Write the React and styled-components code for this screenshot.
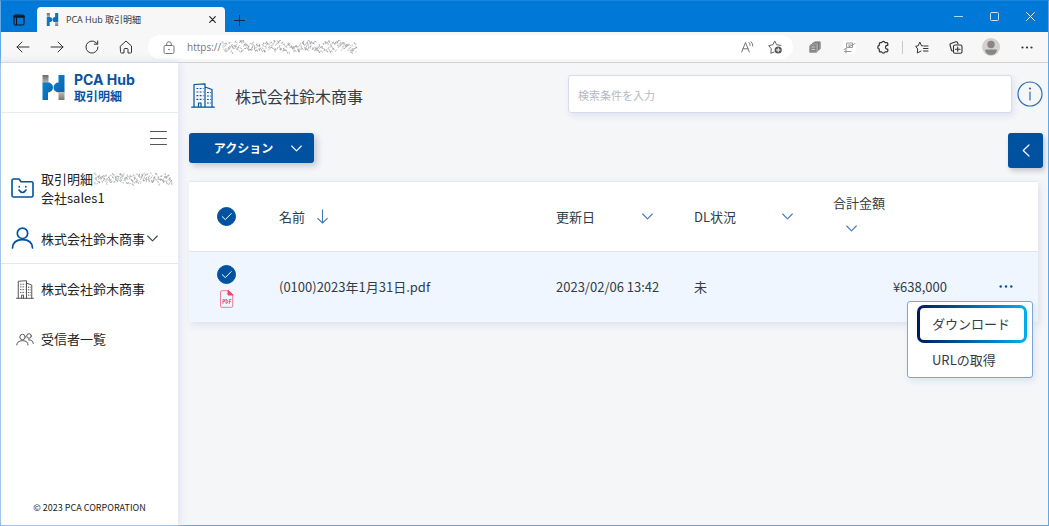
import React from "react";
import styled, { createGlobalStyle } from "styled-components";

const BLUE = "#0052a0";
const INK = "#333c48";

const GlobalStyle = createGlobalStyle`
  *, *::before, *::after { box-sizing: border-box; }
  body {
    margin: 0;
    color: ${INK};
    font-family: "Noto Sans CJK JP", "Noto Sans", sans-serif;
    font-size: 13px;
    line-height: 20px;
  }
  button, input { font: inherit; color: inherit; }
  svg { display: block; flex: none; }
`;

/* ---------- browser frame ---------- */

const Window = styled.div`
  display: flex;
  flex-direction: column;
  min-height: 100vh;
  border: 1px solid #62a8e5;
  border-top-color: #1a84dc;
  background: #f4f6f8;
`;

const TitleBar = styled.header`
  display: flex;
  align-items: flex-end;
  height: 31px;
  background: #0078d7;
`;

const PlainButton = styled.button`
  display: flex;
  align-items: center;
  justify-content: center;
  flex: none;
  padding: 0;
  border: 0;
  background: none;
  cursor: pointer;
`;

const TabMenuButton = styled(PlainButton)`
  width: 36px;
  height: 25px;
`;

const BrowserTab = styled.div`
  display: flex;
  align-items: center;
  gap: 7px;
  width: 188px;
  height: 25px;
  padding: 0 6px 0 9px;
  border-radius: 4px 4px 0 0;
  background: #f7f7f7;
  color: #333;
  font-family: "Open Sans", "Noto Sans CJK JP", sans-serif;
  font-size: 9px;
  line-height: 14px;
`;

const TabTitle = styled.span`
  flex: 1;
  white-space: nowrap;
`;

const TabButton = styled(PlainButton)`
  width: ${(p) => p.$width}px;
  height: 24px;
`;

const WindowControls = styled.div`
  display: flex;
  align-self: stretch;
  margin-left: auto;
`;

const WindowButton = styled(PlainButton)`
  width: 36px;
  height: 30px;
`;

const Toolbar = styled.div`
  display: flex;
  align-items: center;
  height: 31px;
  padding: 0 3px 0 5px;
  border-bottom: 1px solid #cfd1d3;
  background: #f7f7f7;
`;

const ToolButton = styled(PlainButton)`
  width: ${(p) => p.$width || 34}px;
  height: 24px;
`;

const Address = styled.div`
  display: flex;
  align-items: center;
  flex: 1;
  min-width: 0;
  height: 24px;
  margin: 0 5px;
  padding: 0 4px 0 15px;
  border-radius: 12px;
  background: #fff;
`;

const Url = styled.div`
  display: flex;
  align-items: center;
  flex: 1;
  margin-left: 12px;
  color: #777;
  font-family: "Open Sans", "Noto Sans", sans-serif;
  font-size: 10px;
`;

const AddressButton = styled(PlainButton)`
  width: 28px;
  height: 24px;
`;

const Separator = styled.span`
  width: 1px;
  height: 13px;
  margin: 0 2px;
  background: #c9c9c9;
`;

/* ---------- sidebar ---------- */

const Body = styled.div`
  display: flex;
  flex: 1;
`;

const Sidebar = styled.aside`
  display: flex;
  flex-direction: column;
  flex: none;
  width: 177px;
  background: #fff;
  box-shadow: 0 0 8px 1px #dcdfee;
`;

const Brand = styled.a`
  display: flex;
  align-items: center;
  gap: 9px;
  height: 50px;
  padding-left: 41px;
  border-bottom: 1px solid #e9ecef;
  color: #08529f;
  font-weight: 700;
  text-decoration: none;
`;

const BrandText = styled.span`
  display: flex;
  flex-direction: column;
  font-size: 12px;
  line-height: 16px;
`;

const BrandName = styled.span`
  font-family: Inter, "Noto Sans", sans-serif;
  font-size: 14px;
`;

const MenuToggle = styled(PlainButton)`
  align-self: flex-end;
  width: 39px;
  height: 50px;
`;

const AccountBlock = styled.div`
  display: flex;
  flex-direction: column;
  border-bottom: 1px solid #e4e7eb;
`;

const AccountRow = styled.div`
  display: flex;
  align-items: center;
  gap: 7px;
  min-height: 50px;
  padding-left: 10px;
  color: #222;
  line-height: 19px;
`;

const AccountName = styled.span`
  display: flex;
  align-items: center;
`;

const AccountButton = styled(PlainButton)`
  gap: 2px;
  color: #222;
`;

const Nav = styled.nav`
  display: flex;
  flex-direction: column;
  flex: 1;
`;

const NavLink = styled.a`
  display: flex;
  align-items: center;
  gap: 7px;
  height: 50px;
  padding-left: 15px;
  color: #222;
  text-decoration: none;
`;

const Copyright = styled.footer`
  padding: 7px 0;
  color: #222;
  font-size: 9px;
  text-align: center;
`;

/* ---------- main area ---------- */

const Main = styled.main`
  flex: 1;
  min-width: 0;
  padding: 12px 5px 24px 11px;
`;

const PageHeader = styled.div`
  display: grid;
  grid-template-columns: 46px 1fr 52% 31px;
  align-items: center;
  padding-bottom: 20px;
`;

const HeaderIcon = styled.span`
  padding: 2px 0 0 2px;
`;

const Title = styled.h1`
  margin: 0;
  padding-top: 4px;
  font-size: 16px;
  font-weight: 400;
  line-height: 24px;
`;

const Search = styled.input`
  width: 100%;
  height: 38px;
  padding: 2px 9px 0;
  border: 1px solid #d8dcea;
  border-radius: 3px;
  outline: 0;
  background: #fff;
  box-shadow: 2px 3px 6px #dfe3ef;
  font-size: 11px;
  &::placeholder { color: #b4bac2; opacity: 1; }
`;

const InfoButton = styled(PlainButton)`
  justify-self: end;
`;

const ActionBar = styled.div`
  display: flex;
  align-items: flex-start;
  justify-content: space-between;
  padding-bottom: 13px;
`;

const ActionButton = styled(PlainButton)`
  gap: 18px;
  width: 125px;
  height: 30px;
  padding-left: 13px;
  border-radius: 3px;
  background: ${BLUE};
  box-shadow: 3px 3px 6px #c3c7ce;
  color: #fff;
  font-size: 12px;
  font-weight: 700;
`;

const CollapseButton = styled(PlainButton)`
  width: 35px;
  height: 35px;
  border-radius: 3px;
  background: ${BLUE};
  box-shadow: 2px 3px 5px #c3c7ce;
`;

const TableArea = styled.div`
  margin-right: 5px;
  box-shadow: 2px 3px 7px #dde1ec;
`;

const Table = styled.table`
  width: 100%;
  table-layout: fixed;
  border-collapse: collapse;
  background: #fff;
  text-align: left;
`;

const Col = styled.col`
  width: ${(p) => (p.$width ? `${p.$width}px` : "auto")};
`;

const HeadRow = styled.tr`
  height: 70px;
  border-top: 1px solid #e4e8ec;
  border-bottom: 1px solid #dde3e8;
`;

const DataRow = styled.tr`
  height: 70px;
  background: #eff6ff;
`;

const HeadCell = styled.th`
  padding: 0;
  font-weight: 400;
`;

const Cell = styled.td`
  position: relative;
  padding: 0;
  text-align: ${(p) => p.$align || "left"};
`;

const SortButton = styled(PlainButton)`
  justify-content: ${(p) => (p.$spread ? "space-between" : "flex-start")};
  gap: 12px;
  width: ${(p) => (p.$spread ? `${p.$spread}px` : "auto")};
`;

const StackedSortButton = styled(PlainButton)`
  flex-direction: column;
  align-items: flex-start;
  gap: 12px;
  padding-bottom: 8px;
  svg { margin-left: 13px; }
`;

const SelectStack = styled.div`
  display: flex;
  flex-direction: column;
  gap: 6px;
  padding-left: 28px;
`;

const CheckLabel = styled.label`
  display: grid;
  width: 20px;
  height: 19px;
  svg { grid-area: 1 / 1; pointer-events: none; }
`;

const CheckInput = styled.input`
  grid-area: 1 / 1;
  width: 19px;
  height: 19px;
  margin: 0;
  appearance: none;
  border: 1px solid ${BLUE};
  border-radius: 50%;
  background: #fff;
  &:checked { background: ${BLUE}; }
`;

const MoreButton = styled(PlainButton)`
  width: 24px;
  height: 20px;
  margin-left: 47px;
`;

const Menu = styled.div`
  position: absolute;
  top: 49px;
  right: 5px;
  z-index: 1;
  display: flex;
  flex-direction: column;
  width: 126px;
  padding: 3px 5px 0 9px;
  border: 1px solid #7fa6d3;
  border-radius: 3px;
  background: #fff;
  box-shadow: 2px 3px 6px #dfe3ee;
`;

const MenuItem = styled.button`
  height: ${(p) => (p.$active ? 38 : 34)}px;
  padding: 0 0 0 12px;
  border: 3px solid transparent;
  border-radius: 7px;
  background: ${(p) =>
    p.$active
      ? "linear-gradient(#fff, #fff) padding-box, linear-gradient(90deg, #001a5c, #00b0f0) border-box"
      : "none"};
  color: ${INK};
  text-align: left;
  cursor: pointer;
`;

/* ---------- drawings ---------- */

const Icon = ({ w = 16, h = w, box, color = "#333", sw = 1, children }) => (
  <svg
    width={w}
    height={h}
    viewBox={box || `0 0 ${w} ${h}`}
    fill="none"
    stroke={color}
    strokeWidth={sw}
    strokeLinecap="round"
    strokeLinejoin="round"
    aria-hidden="true"
  >
    {children}
  </svg>
);

const Chevron = ({ color = "#4679b4" }) => (
  <Icon w={11} h={7} color={color} sw={1.1}>
    <path d="M.7 1 5.5 5.8 10.3 1" />
  </Icon>
);

/* Short random pen strokes that hide a private name. */
function scribblePath(width, seed) {
  let s = seed;
  const next = () => {
    s = (s * 16807) % 2147483647;
    return s / 2147483647;
  };
  let d = "";
  for (let x = 1; x < width - 3; x += 0.45) {
    const y = 6.5 + Math.sin(x / 5) * 1.2 + (next() - 0.5) * 10;
    const dx = (next() - 0.4) * 2.6;
    const dy = (next() - 0.5) * 4;
    d += `M${x.toFixed(1)} ${y.toFixed(1)}l${dx.toFixed(1)} ${dy.toFixed(1)}`;
  }
  return d;
}

const Scribble = ({ width, seed }) => (
  <Icon w={width} h={14} color="#85868c" sw={0.6}>
    <path d={scribblePath(width, seed)} />
  </Icon>
);

const Logo = ({ w, h }) => (
  <svg width={w} height={h} viewBox="0 0 22 25" aria-hidden="true">
    <defs>
      <linearGradient id="steel" x1="0" y1="0" x2="0" y2="1">
        <stop offset="0" stopColor="#6d6a68" />
        <stop offset="1" stopColor="#b9b6b2" />
      </linearGradient>
      <linearGradient id="steelLow" x1="0" y1="0" x2="0" y2="1">
        <stop offset="0" stopColor="#c0bdb9" />
        <stop offset="1" stopColor="#77736f" />
      </linearGradient>
      <linearGradient id="sea" x1="0" y1="0" x2="1" y2="1">
        <stop offset="0" stopColor="#0b84cf" />
        <stop offset="1" stopColor="#0b62ad" />
      </linearGradient>
    </defs>
    <path fill="url(#steel)" d="M0 0H6V8H0z" />
    <path fill="url(#sea)" d="M0 7.5H5.5A5 5 0 0 1 5.5 17.5V25H0z" />
    <path fill="url(#sea)" d="M22 0H16V7.5A5 5 0 0 0 16 17.5H22z" />
    <path fill="url(#steelLow)" d="M16 17H22V25H16z" />
  </svg>
);

const Building = ({ w, h, color, sw }) => (
  <Icon w={w} h={h} box="0 0 24 25" color={color} sw={sw}>
    <path d="M.7 24.2H23.3M3 24V1.5L14 .8V24M14 4 21 6.5V24M7.5 24V20H10V24" />
    <path
      strokeLinecap="butt"
      strokeDasharray="1.8 1.4"
      d="M5.5 5.5H12.5M5.5 9H12.5M5.5 12.7H12.5M5.5 16.4H12.5M16 9.5H20M16 13H20M16 16.5H20M16 20H20"
    />
  </Icon>
);

const Check = () => (
  <Icon w={19} h={19} color="#fff" sw={1}>
    <path d="M5.2 9.6 8.3 12.6 14.2 6.6" />
  </Icon>
);

const SelectBox = ({ label }) => (
  <CheckLabel>
    <CheckInput type="checkbox" defaultChecked aria-label={label} />
    <Check />
  </CheckLabel>
);

const BrowserChrome = () => (
  <>
    <TitleBar>
      <TabMenuButton aria-label="タブ操作メニュー">
        <Icon w={12} h={12} color="#0a1a2c" sw={1.2}>
          <rect x="1" y="1" width="10" height="10" rx="1.5" />
          <path d="M1.5 2.5H10.5" strokeWidth="2.4" />
          <path d="M3.5 4V10.5" />
        </Icon>
      </TabMenuButton>
      <BrowserTab>
        <Logo w={13} h={13} />
        <TabTitle>PCA Hub 取引明細</TabTitle>
        <TabButton $width={14} aria-label="タブを閉じる">
          <Icon w={7} h={7} color="#222" sw={1.1}>
            <path d="M.7.7 6.3 6.3M6.3.7.7 6.3" />
          </Icon>
        </TabButton>
      </BrowserTab>
      <TabButton $width={28} aria-label="新しいタブ">
        <Icon w={11} h={11} color="#062b50">
          <path d="M5.5.5V10.5M.5 5.5H10.5" />
        </Icon>
      </TabButton>
      <WindowControls>
        <WindowButton aria-label="最小化">
          <Icon w={9} h={9} color="#b8dcf8"><path d="M.5 4.5H8.5" /></Icon>
        </WindowButton>
        <WindowButton aria-label="最大化">
          <Icon w={9} h={9} color="#c8e3fa"><rect x=".5" y=".5" width="8" height="8" rx="1" /></Icon>
        </WindowButton>
        <WindowButton aria-label="閉じる">
          <Icon w={9} h={9} color="#e3f1fc"><path d="M.5.5 8.5 8.5M8.5.5.5 8.5" /></Icon>
        </WindowButton>
      </WindowControls>
    </TitleBar>
    <Toolbar>
      <ToolButton aria-label="戻る">
        <Icon w={14} h={12}><path d="M13 6H1M6 1 1 6 6 11" /></Icon>
      </ToolButton>
      <ToolButton aria-label="進む">
        <Icon w={14} h={12}><path d="M1 6H13M8 1 13 6 8 11" /></Icon>
      </ToolButton>
      <ToolButton $width={35} aria-label="更新">
        <Icon w={14} h={14}><path d="M13 7A6 6 0 1 1 11 2.6L12.5 4M12.7 1V4.2H9.3" /></Icon>
      </ToolButton>
      <ToolButton aria-label="ホーム">
        <Icon w={14} h={14}>
          <path d="M1.5 6 7 1 12.5 6V12Q12.5 13 11.5 13H9V9.5Q9 8.5 8 8.5H6Q5 8.5 5 9.5V13H2.5Q1.5 13 1.5 12Z" />
        </Icon>
      </ToolButton>
      <Address>
        <Icon w={12} h={13} color="#777">
          <rect x="1" y="4.5" width="10" height="8" rx="1.3" />
          <path d="M3.7 4.5V3A2.3 2.3 0 0 1 8.3 3V4.5" />
          <circle cx="6" cy="8.5" r=".4" fill="#777" />
        </Icon>
        <Url>
          https://
          <Scribble width={139} seed={4217} />
        </Url>
        <AddressButton aria-label="音声で読み上げる">
          <Icon w={13} h={12} color="#777">
            <path d="M.7 11 4.5 1.5 8.3 11M2 7.8H7M8 1.5Q9.2 2.7 9.2 4.3M10 .7Q12 2.5 11.8 5" />
          </Icon>
        </AddressButton>
        <AddressButton aria-label="お気に入りに追加">
          <Icon w={14} h={14} color="#666">
            <path d="M6 12 2.8 13.3 3.3 8.8.7 5.6 4.8 4.8 6.7 1 8.7 4.8 13 5.4" />
            <circle cx="10.2" cy="10" r="3.6" fill="#555" stroke="none" />
            <path d="M10.2 8.2V11.8M8.4 10H12" stroke="#fff" />
          </Icon>
        </AddressButton>
      </Address>
      <ToolButton aria-label="拡張機能 1">
        <Icon w={12} h={12} color="#999">
          <path d="M4.5 2 6 .8H11.3V7.5L10 9" fill="#8c8c8c" />
          <path d="M3 3.5 4 2H9.5V9L8 10.5" fill="#aaa" stroke="#777" />
          <path d="M1 4.5 2 3.5H7.5V11.3H1Z" fill="#888" />
          <path d="M3 6H5.5M3 8.5H5.5" stroke="#ccc" />
        </Icon>
      </ToolButton>
      <ToolButton aria-label="拡張機能 2">
        <Icon w={13} h={13} color="#999">
          <rect width="13" height="13" fill="#fff" stroke="none" />
          <path d="M4 2H9.5V6.5H4ZM1 8.5 12 2.5M1.5 10.5H8M3 8V12M5.5 4H8" />
        </Icon>
      </ToolButton>
      <ToolButton aria-label="拡張機能">
        <Icon w={14} h={14} sw={1.2}>
          <path d="M4.3 2.7H5.7A1.7 1.7 0 0 1 9 2.7H10.8Q11.8 2.7 11.8 3.7V5.3H11A2 2 0 0 0 11 9.2H11.8V10.8Q11.8 11.9 10.8 11.9H9A1.7 1.7 0 0 1 5.7 11.9H4.3Q3.3 11.9 3.3 10.9V9.2A2 2 0 0 1 3.3 5.3V3.7Q3.3 2.7 4.3 2.7Z" />
        </Icon>
      </ToolButton>
      <Separator />
      <ToolButton aria-label="お気に入り">
        <Icon w={14} h={13}>
          <path d="M8 4.8H6.5L4.8 1 3.2 4.8.7 5.2 2.7 8 2.3 12 6 10M9 5H13M8.5 7.5H13M8.5 10H13" />
        </Icon>
      </ToolButton>
      <ToolButton aria-label="コレクション">
        <Icon w={14} h={13} sw={1.1}>
          <path d="M3.5 10 2.5 9.5 1 4Q.8 3 1.8 2.5L7 .8Q8 .6 8.5 1.5L9 3" />
          <rect x="4.5" y="4" width="8.5" height="8.3" rx="1.5" />
          <path d="M8.7 6V10.3M6.5 8.2H11" />
        </Icon>
      </ToolButton>
      <ToolButton $width={36} aria-label="プロファイル">
        <svg width="18" height="18" aria-hidden="true">
          <circle cx="9" cy="9" r="9" fill="#d3d0cd" />
          <circle cx="9" cy="6.5" r="3.7" fill="#8b8683" />
          <path d="M3 12.5Q3 11.5 4 11.5H14Q15 11.5 15 12.5 13.5 17 9 17 4.5 17 3 12.5Z" fill="#8b8683" />
        </svg>
      </ToolButton>
      <ToolButton $width={36} aria-label="設定など">
        <svg width="12" height="3" fill="#333" aria-hidden="true">
          <circle cx="1.5" cy="1.5" r="1.1" />
          <circle cx="6" cy="1.5" r="1.1" />
          <circle cx="10.5" cy="1.5" r="1.1" />
        </svg>
      </ToolButton>
    </Toolbar>
  </>
);

const SideMenu = () => (
  <Sidebar>
    <Brand href="#home">
      <Logo w={23} h={25} />
      <BrandText>
        <BrandName>PCA Hub</BrandName>
        <span>取引明細</span>
      </BrandText>
    </Brand>
    <MenuToggle aria-label="メニュー">
      <Icon w={17} h={14} color="#555">
        <path d="M.5.5H16.5M.5 7.5H16.5M.5 13.5H16.5" />
      </Icon>
    </MenuToggle>
    <AccountBlock>
      <AccountRow>
        <Icon w={23} h={20} color={BLUE} sw={1.6}>
          <path d="M1 2.5Q1 1 2.5 1H8L10 3.7H20.5Q22 3.7 22 5.2V17.5Q22 19 20.5 19H2.5Q1 19 1 17.5Z" />
          <path d="M8 12Q11.5 17 15 12M8.2 8.5V9M14.8 8.5V9" />
        </Icon>
        <span>
          <AccountName>
            取引明細
            <Scribble width={82} seed={911} />
          </AccountName>
          会社sales1
        </span>
      </AccountRow>
      <AccountRow>
        <Icon w={23} h={22} color={BLUE} sw={1.7}>
          <circle cx="11.5" cy="6.3" r="5.2" />
          <path d="M1.5 21Q2 12.7 11.5 12.7T21.5 21" />
        </Icon>
        <AccountButton>
          株式会社鈴木商事
          <Chevron color="#444" />
        </AccountButton>
      </AccountRow>
    </AccountBlock>
    <Nav>
      <NavLink href="#company">
        <Building w={18} h={19} color="#444" sw={1.2} />
        株式会社鈴木商事
      </NavLink>
      <NavLink href="#recipients">
        <Icon w={18} h={13} color="#555">
          <circle cx="6.5" cy="4" r="2.7" />
          <circle cx="13" cy="3" r="2.3" />
          <path d="M.8 12Q1 7.7 6.5 7.7T12 12M12.5 6.8Q17 6.8 17.3 10.5" />
        </Icon>
        受信者一覧
      </NavLink>
    </Nav>
    <Copyright>© 2023 PCA CORPORATION</Copyright>
  </Sidebar>
);

const Documents = () => (
  <TableArea>
    <Table>
      <colgroup>
        <Col $width={90} />
        <Col />
        <Col $width={138} />
        <Col $width={139} />
        <Col $width={114} />
        <Col $width={91} />
      </colgroup>
      <thead>
        <HeadRow>
          <HeadCell>
            <SelectStack><SelectBox label="すべて選択" /></SelectStack>
          </HeadCell>
          <HeadCell>
            <SortButton>
              名前
              <Icon w={11} h={15} color="#4679b4" sw={1.1}>
                <path d="M5.5.7V14M.7 9.3 5.5 14 10.3 9.3" />
              </Icon>
            </SortButton>
          </HeadCell>
          <HeadCell><SortButton $spread={97}>更新日<Chevron /></SortButton></HeadCell>
          <HeadCell><SortButton $spread={99}>DL状況<Chevron /></SortButton></HeadCell>
          <HeadCell><StackedSortButton>合計金額<Chevron /></StackedSortButton></HeadCell>
          <HeadCell />
        </HeadRow>
      </thead>
      <tbody>
        <DataRow>
          <Cell>
            <SelectStack>
              <SelectBox label="(0100)2023年1月31日.pdf を選択" />
              <Icon w={19} h={18} color="#ef7f98">
                <path d="M11.5.7H5Q3.5.7 3.5 2V16Q3.5 17.3 5 17.3H14.5Q15.7 17.3 15.7 16V5Z" />
                <path d="M11 .7V5H15.7Z" fill="#e84468" stroke="#e84468" />
                <path
                  stroke="#e8577a"
                  strokeWidth=".9"
                  d="M6 13.5V9.5H7.5V11.5H6M9 9.5V13.5Q10.7 13.5 10.7 11.5T9 9.5M12.3 13.5V9.5H14M12.3 11.5H13.6"
                />
              </Icon>
            </SelectStack>
          </Cell>
          <Cell>(0100)2023年1月31日.pdf</Cell>
          <Cell>2023/02/06 13:42</Cell>
          <Cell>未</Cell>
          <Cell $align="right">¥638,000</Cell>
          <Cell>
            <MoreButton aria-label="操作" aria-expanded="true">
              <svg width="14" height="3" fill={BLUE} aria-hidden="true">
                <circle cx="1.7" cy="1.5" r="1.2" />
                <circle cx="7" cy="1.5" r="1.2" />
                <circle cx="12.3" cy="1.5" r="1.2" />
              </svg>
            </MoreButton>
            <Menu>
              <MenuItem $active>ダウンロード</MenuItem>
              <MenuItem>URLの取得</MenuItem>
            </Menu>
          </Cell>
        </DataRow>
      </tbody>
    </Table>
  </TableArea>
);

export default function App() {
  return (
    <Window>
      <GlobalStyle />
      <BrowserChrome />
      <Body>
        <SideMenu />
        <Main>
          <PageHeader>
            <HeaderIcon><Building w={24} h={25} color={BLUE} sw={1.2} /></HeaderIcon>
            <Title>株式会社鈴木商事</Title>
            <Search type="search" placeholder="検索条件を入力" aria-label="検索条件" />
            <InfoButton aria-label="情報">
              <Icon w={26} h={26} color="#2f6db0" sw={1.2}>
                <circle cx="13" cy="13" r="12" />
                <path d="M13 11V19" />
                <circle cx="13" cy="7.5" r=".5" fill="#2f6db0" />
              </Icon>
            </InfoButton>
          </PageHeader>
          <ActionBar>
            <ActionButton>
              アクション
              <Chevron color="#fff" />
            </ActionButton>
            <CollapseButton aria-label="パネルを開く">
              <Icon w={8} h={13} color="#fff" sw={1.2}>
                <path d="M7 1 1.2 6.5 7 12" />
              </Icon>
            </CollapseButton>
          </ActionBar>
          <Documents />
        </Main>
      </Body>
    </Window>
  );
}
